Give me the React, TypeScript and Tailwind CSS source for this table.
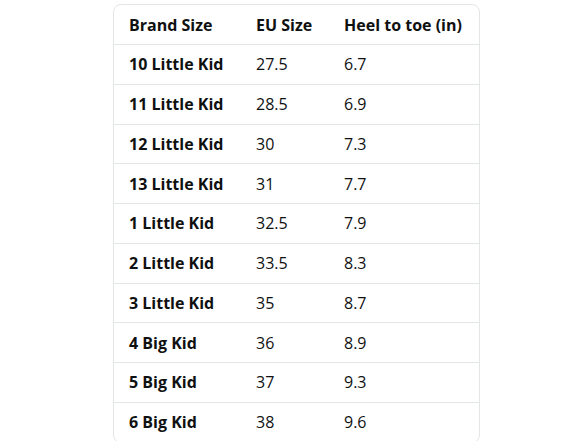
import React from "react";

const rows: [string, string, string][] = [
  ["10 Little Kid", "27.5", "6.7"],
  ["11 Little Kid", "28.5", "6.9"],
  ["12 Little Kid", "30", "7.3"],
  ["13 Little Kid", "31", "7.7"],
  ["1 Little Kid", "32.5", "7.9"],
  ["2 Little Kid", "33.5", "8.3"],
  ["3 Little Kid", "35", "8.7"],
  ["4 Big Kid", "36", "8.9"],
  ["5 Big Kid", "37", "9.3"],
  ["6 Big Kid", "38", "9.6"],
];

export default function App() {
  return (
    <div className="w-[588px] h-[441px] bg-white overflow-hidden pt-[4px] pl-[113px] text-[#0f1111] text-[16px]" style={{ fontFamily: '"Open Sans", "Noto Sans", sans-serif' }}>
      <div className="w-[367px] border border-[#e3e6e6] rounded-[8px] overflow-hidden">
        <div className="flex items-center h-[39px] font-bold">
          <div className="w-[142px] pl-[15px]">Brand Size</div>
          <div className="w-[88px]">EU Size</div>
          <div className="flex-1">Heel to toe (in)</div>
        </div>
        {rows.map((r) => (
          <div key={r[0]} className="flex items-center h-[39.75px] border-t border-[#e3e6e6]">
            <div className="w-[142px] pl-[15px] font-bold">{r[0]}</div>
            <div className="w-[88px]">{r[1]}</div>
            <div className="flex-1">{r[2]}</div>
          </div>
        ))}
      </div>
    </div>
  );
}
